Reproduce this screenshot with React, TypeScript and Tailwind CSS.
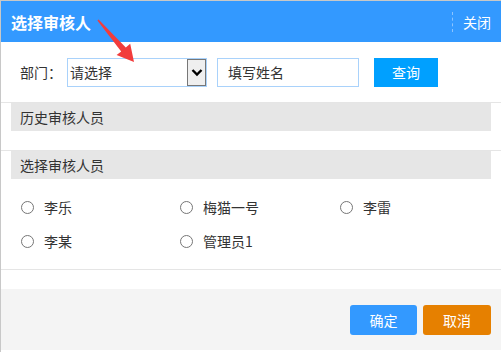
import { useState } from "react";

const people = ["李乐", "梅猫一号", "李雷", "李某", "管理员1"];

function Radio({ label, checked, onPick }: { label: string; checked: boolean; onPick: () => void }) {
  return (
    <label onClick={onPick} className="flex items-center h-[34px] cursor-pointer">
      <span className="w-[13px] h-[13px] rounded-full border border-[#767676] bg-white flex items-center justify-center">
        {checked && <span className="w-[7px] h-[7px] rounded-full bg-[#3399ff]" />}
      </span>
      <span className="ml-[10px] text-[14px] text-[#333]">{label}</span>
    </label>
  );
}

export default function App() {
  const [picked, setPicked] = useState<string | null>(null);

  return (
    <div
      className="relative w-[501px] h-[352px] overflow-hidden bg-white border-t border-l border-[#c8c8c8]"
      style={{ fontFamily: '"Noto Sans CJK SC", "Noto Sans", sans-serif' }}
    >
      {/* Header */}
      <div className="h-[41px] bg-[#3399ff] flex items-center justify-between pl-[10px]">
        <span className="text-white font-bold text-[16px] leading-none">选择审核人</span>
        <div className="flex items-center h-[20px] border-l border-dashed border-[#8cc4ff] pl-[10px] pr-[10px]">
          <span className="text-white text-[14px] leading-none">关闭</span>
        </div>
      </div>

      {/* Search row */}
      <div className="flex items-center h-[29px] mt-[16px] pl-[19px]">
        <span className="text-[14px] text-[#333] w-[47px]">部门：</span>
        <div className="flex items-stretch w-[140px] h-[29px] border border-[#a9d2fb]">
          <span className="flex-1 flex items-center pl-[2px] text-[14px] text-[#333]">请选择</span>
          <span className="w-[19px] bg-[#efefef] border border-[#777] flex items-center justify-center">
            <svg width="12" height="9" viewBox="0 0 12 9">
              <path d="M1.5 2 L6 6.5 L10.5 2" fill="none" stroke="#000" strokeWidth="2.4" />
            </svg>
          </span>
        </div>
        <div className="ml-[10px] w-[142px] h-[29px] border border-[#a9d2fb] flex items-center pl-[10px] text-[14px] text-[#333]">
          填写姓名
        </div>
        <button className="ml-[15px] w-[64px] h-[29px] bg-[#00a0ff] text-white text-[14px]">查询</button>
      </div>

      {/* History */}
      <div className="mt-[15px] border-t border-[#e5e5e5] pb-[19px]">
        <div className="ml-[10px] mr-[10px] h-[28px] bg-[#e6e6e6] flex items-center pl-[9px] text-[14px] text-[#333]">
          历史审核人员
        </div>
      </div>

      {/* Choose */}
      <div className="border-t border-[#e5e5e5]">
        <div className="ml-[10px] mr-[10px] h-[28px] bg-[#e6e6e6] flex items-center pl-[9px] text-[14px] text-[#333]">
          选择审核人员
        </div>
        <div className="grid grid-cols-[159px_160px_160px] pl-[20px] pt-[11px] pb-[11px]">
          {people.map((p) => (
            <Radio key={p} label={p} checked={picked === p} onPick={() => setPicked(p)} />
          ))}
        </div>
      </div>

      <div className="border-t border-[#e5e5e5] h-[20px]" />

      {/* Footer */}
      <div className="h-[61px] bg-[#f4f4f4] flex items-start justify-end pt-[16px] pr-[10px] gap-[6px]">
        <button className="w-[67px] h-[30px] rounded-[3px] bg-[#3399ff] text-white text-[14px]">确定</button>
        <button className="w-[68px] h-[30px] rounded-[3px] bg-[#e68000] text-white text-[14px]">取消</button>
      </div>

      {/* Red arrow annotation */}
      <svg className="absolute left-[94px] top-[17px]" width="44" height="48" viewBox="0 0 44 48">
        <polygon
          points="3.6,1.5 30.8,29.5 35.2,25.8 39,44 21.6,37 26.2,33.6 2.4,2.5"
          fill="#f23c3c"
        />
      </svg>
    </div>
  );
}
